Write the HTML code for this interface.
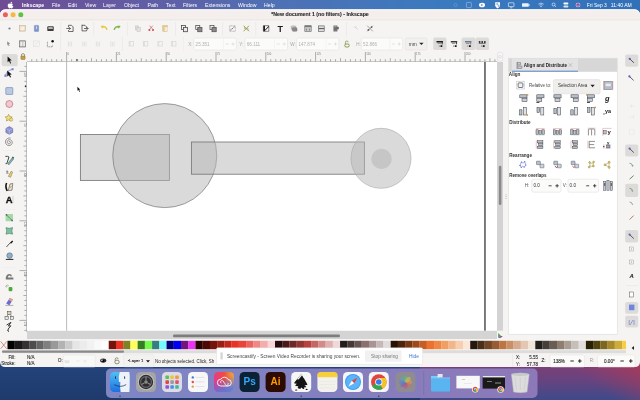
<!DOCTYPE html>
<html><head><meta charset="utf-8">
<style>
html,body{margin:0;padding:0;width:640px;height:400px;overflow:hidden;background:#23427a;}
svg{display:block;position:absolute;left:0;top:0;will-change:transform;}
text{font-family:"Liberation Sans",sans-serif;}
</style></head>
<body>
<svg width="640" height="400" viewBox="0 0 640 400">
<defs>
<linearGradient id="menuG" x1="0" y1="0" x2="1" y2="0">
<stop offset="0" stop-color="#6e4c94"/><stop offset="0.156" stop-color="#6658a0"/><stop offset="0.31" stop-color="#5a64aa"/><stop offset="0.42" stop-color="#5070b4"/><stop offset="0.7" stop-color="#3a7abf"/><stop offset="1" stop-color="#3270b8"/>
</linearGradient>
<linearGradient id="deskG" x1="0" y1="1" x2="1" y2="0">
<stop offset="0" stop-color="#1d3a6c"/><stop offset="0.55" stop-color="#2e4a84"/><stop offset="0.8" stop-color="#5c3d7c"/><stop offset="1" stop-color="#a23a5e"/>
</linearGradient>
<linearGradient id="deskR" gradientUnits="userSpaceOnUse" x1="0" y1="367" x2="0" y2="400"><stop offset="0" stop-color="#7a4078"/><stop offset="0.45" stop-color="#644480"/><stop offset="1" stop-color="#3e4a8a"/></linearGradient>
<linearGradient id="deskR2" gradientUnits="userSpaceOnUse" x1="620" y1="402" x2="648" y2="362"><stop offset="0" stop-color="#a83c5c" stop-opacity="0"/><stop offset="1" stop-color="#aa3a58" stop-opacity="1"/></linearGradient>
<linearGradient id="deskL" gradientUnits="userSpaceOnUse" x1="0" y1="367" x2="0" y2="400"><stop offset="0" stop-color="#23437a"/><stop offset="1" stop-color="#1f3a6c"/></linearGradient>
<linearGradient id="dockG" x1="0" y1="0" x2="1" y2="0">
<stop offset="0" stop-color="#7e86c4"/><stop offset="0.5" stop-color="#8480bf"/><stop offset="1" stop-color="#8d78b8"/>
</linearGradient>
<linearGradient id="finderG" x1="0" y1="0" x2="0" y2="1"><stop offset="0" stop-color="#4fc0f5"/><stop offset="1" stop-color="#1d6fe0"/></linearGradient>
<linearGradient id="ccG" x1="0" y1="0" x2="1" y2="0"><stop offset="0" stop-color="#e83a8a"/><stop offset="0.5" stop-color="#f04a40"/><stop offset="1" stop-color="#f6b030"/></linearGradient>
<linearGradient id="ccG2" x1="0" y1="0" x2="0.3" y2="1"><stop offset="0.35" stop-color="#6a5af0" stop-opacity="0"/><stop offset="1" stop-color="#4a7af0" stop-opacity="0.85"/></linearGradient>
<linearGradient id="folderG" x1="0" y1="0" x2="0" y2="1"><stop offset="0" stop-color="#7fcdf7"/><stop offset="1" stop-color="#3ea0e6"/></linearGradient>
</defs>

<rect x="0" y="0" width="640" height="400" fill="url(#deskL)"/>
<rect x="420" y="360" width="220" height="40" fill="url(#deskR)"/>
<rect x="420" y="360" width="220" height="40" fill="url(#deskR2)"/>
<rect x="0" y="0" width="640" height="16" fill="url(#menuG)"/>
<g fill="#fff" font-size="5.2">
<path d="M11.6 3.1 c0.4 -0.5 0.6 -1 0.5 -1.4 c-0.5 0 -1 0.3 -1.3 0.7 c-0.3 0.3 -0.5 0.8 -0.4 1.3 c0.5 0 0.9 -0.3 1.2 -0.6z M13.4 6.3 c-0.2 0.6 -0.5 1 -0.8 1.5 c-0.3 0.4 -0.6 0.6 -1 0.6 c-0.4 0 -0.6 -0.3 -1.1 -0.3 c-0.5 0 -0.7 0.3 -1.1 0.3 c-0.4 0 -0.7 -0.4 -1 -0.8 c-0.6 -0.9 -0.9 -2.2 -0.5 -3.1 c0.3 -0.5 0.8 -0.9 1.4 -0.9 c0.4 0 0.8 0.3 1.1 0.3 c0.3 0 0.7 -0.3 1.2 -0.3 c0.5 0 1 0.3 1.3 0.7 c-1 0.6 -0.9 2 0.5 2.0z"/>
<text x="22" y="6.6" font-weight="bold">Inkscape</text>
<text x="52" y="6.6">File</text>
<text x="68" y="6.6">Edit</text>
<text x="85" y="6.6">View</text>
<text x="103" y="6.6">Layer</text>
<text x="124" y="6.6">Object</text>
<text x="147.5" y="6.6">Path</text>
<text x="166" y="6.6">Text</text>
<text x="183" y="6.6">Filters</text>
<text x="205" y="6.6">Extensions</text>
<text x="238" y="6.6">Window</text>
<text x="264" y="6.6">Help</text>
<text x="586.8" y="6.6" font-size="4.95">Fri Sep 3</text><text x="610.8" y="6.6" font-size="5.05">11:40 AM</text>
</g>
<g fill="none" stroke="#fff" stroke-width="0.6">
<circle cx="455.6" cy="5" r="1.6" opacity="0.25"/>
<rect x="466.4" y="2.4" width="5" height="5.2" rx="1" opacity="0.55"/>
<rect x="508.4" y="2.8" width="5.6" height="3.8" rx="0.5"/><path d="M510 7.8 h2.4"/>
<path d="M538.4 4.2 q2.6 -2.4 5.2 0 M539.5 5.3 q1.5 -1.4 3 0"/>
<circle cx="553.6" cy="4.5" r="1.5"/><path d="M554.7 5.6 l1.3 1.3"/>
</g>
<g fill="#fff">
<ellipse cx="482" cy="5" rx="3" ry="2.3"/>
<path d="M495.2 2.2 h4.8 v3.4 q0 1.8 -2.4 2.8 q-2.4 -1 -2.4 -2.8z"/>
<rect x="522" y="3.2" width="6.8" height="3.6" rx="0.9" opacity="0.9"/><rect x="529" y="4.3" width="0.6" height="1.4"/>
<circle cx="541" cy="6.6" r="0.55"/>
<rect x="563.4" y="2.4" width="5" height="2.2" rx="1"/><rect x="563.4" y="5.4" width="5" height="2.2" rx="1" opacity="0.8"/>
</g>
<path d="M480.8 4 l1.8 1 l-1.8 1" fill="none" stroke="#3a5a9a" stroke-width="0.6"/>
<path d="M497.8 3.2 q-1.2 0 -1.2 0.8 q0 0.8 1.2 0.8 q1.2 0 1.2 0.8 q0 0.8 -1.2 0.8" fill="none" stroke="#3a66ac" stroke-width="0.6"/>
<circle cx="578" cy="5" r="2.3" fill="#ece8f4"/><circle cx="578" cy="5" r="1.8" fill="#5b4aa8"/><path d="M576.6 5.8 q1.4 -2.6 2.8 0z" fill="#f06a8a"/>
<rect x="0" y="9.5" width="640" height="357.6" rx="5" fill="#f5f4f2"/>
<path d="M0 14.8 a5.5 5.5 0 0 1 5.5 -5.5 H634.5 a5.5 5.5 0 0 1 5.5 5.5 V20 H0 Z" fill="#ffffff"/>
<path d="M0 15.6 a5.5 5.5 0 0 1 5.5 -5.3 H634.5 a5.5 5.5 0 0 1 5.5 5.3 V20 H0 Z" fill="#f4eeed"/>
<rect x="0" y="19.6" width="640" height="0.6" fill="#e4e0df"/>
<circle cx="5.4" cy="14.7" r="2.5" fill="#ec5f57"/><circle cx="13.1" cy="14.7" r="2.5" fill="#f2bb3d"/><circle cx="20.8" cy="14.7" r="2.5" fill="#5ec440"/>
<text x="271.3" y="16.1" font-size="5.22" font-weight="bold" fill="#2e2e2e" stroke="#2e2e2e" stroke-width="0.12">*New document 1 (no filters) - Inkscape</text>
<rect x="8.4" y="27.4" width="2.2" height="2.2" rx="1.1" fill="#6f7c94"/>
<rect x="19.6" y="25.7" width="5.8" height="5.4" fill="#e8dcc2" stroke="#b8a888" stroke-width="0.5"/>
<rect x="20.6" y="26.7" width="3.8" height="3.4" fill="#f7f1e4"/>
<rect x="34.4" y="25.4" width="4.2" height="6" rx="0.5" fill="#7f9bd0" stroke="#5a72a8" stroke-width="0.4"/>
<rect x="36.1" y="26.3" width="0.8" height="2.6" fill="#dfe8f8"/>
<rect x="47.3" y="26.3" width="6.4" height="4.8" rx="0.9" fill="#3c3c3c"/>
<rect x="48.3" y="27.3" width="4.4" height="1.5" fill="#ddd"/>
<rect x="60.6" y="22" width="0.6" height="14" fill="#e6e4e2"/>
<path d="M68.5 25.3 h3 l1.6 1.6 v4.6 h-4.6 v-1.4 M68.5 27.3 v-2" fill="none" stroke="#333" stroke-width="0.7"/>
<path d="M66.3 28.5 h4.2 M69.2 27.2 l1.3 1.3 l-1.3 1.3" fill="none" stroke="#333" stroke-width="0.7"/>
<path d="M82 25.3 h3 l1.6 1.6 v1.1 M86.6 29.7 v1.2 h-4.6 v-6.2" fill="none" stroke="#333" stroke-width="0.7"/>
<path d="M84 28.5 h4 M86.9 27.2 l1.3 1.3 l-1.3 1.3" fill="none" stroke="#333" stroke-width="0.7"/>
<rect x="93.5" y="22" width="0.6" height="14" fill="#e6e4e2"/>
<path d="M102.4 27.3 q3.4 -1.6 4.6 2.6" fill="none" stroke="#e8c838" stroke-width="1.5"/><path d="M100.6 25.9 l3 -0.4 l-1.2 3.2z" fill="#e8c838"/>
<path d="M118.8 27.3 q-3.4 -1.6 -4.6 2.6" fill="none" stroke="#78b848" stroke-width="1.5"/><path d="M120.6 25.9 l-3 -0.4 l1.2 3.2z" fill="#78b848"/>
<rect x="127.5" y="22" width="0.6" height="14" fill="#e6e4e2"/>
<rect x="135.3" y="25.9" width="3.4" height="4" fill="#ddd" stroke="#c2c2c2" stroke-width="0.5"/><rect x="137" y="27.5" width="3.4" height="4" fill="#e2e2e2" stroke="#c2c2c2" stroke-width="0.5"/>
<path d="M149.6 25.7 l3.2 3.6 M152.8 25.7 l-3.2 3.6" stroke="#d86c6c" stroke-width="0.8"/><circle cx="149.4" cy="30.1" r="1" fill="#c94848"/><circle cx="153" cy="30.1" r="1" fill="#c94848"/>
<rect x="162.8" y="25.7" width="4.4" height="5.6" fill="#e2c88a" stroke="#c9a95e" stroke-width="0.4"/><rect x="164.6" y="27.1" width="3" height="4" fill="#f4ecd6"/>
<rect x="175" y="22" width="0.6" height="14" fill="#e6e4e2"/>
<rect x="181.4" y="25.5" width="4" height="4" fill="none" stroke="#4a4a4a" stroke-width="0.8"/>
<rect x="183.4" y="27.5" width="4.2" height="4.2" fill="#e8e8e8" stroke="#4a4a4a" stroke-width="0.8"/>
<rect x="195.75" y="25.5" width="4" height="4" fill="none" stroke="#555" stroke-width="0.8"/>
<rect x="197.75" y="27.5" width="4.2" height="4.2" fill="#8a8a8a" stroke="#555" stroke-width="0.8"/>
<rect x="210" y="25.5" width="4" height="4" fill="none" stroke="#555" stroke-width="0.8"/>
<rect x="212" y="27.5" width="4.2" height="4.2" fill="#8a8a8a" stroke="#555" stroke-width="0.8"/>
<rect x="222.5" y="22" width="0.6" height="14" fill="#e6e4e2"/>
<rect x="229.7" y="25.7" width="5.6" height="5.6" fill="none" stroke="#666" stroke-width="0.5" stroke-dasharray="0.8 0.6"/><path d="M230.5 30.5 l4 -4" stroke="#555" stroke-width="0.7"/><circle cx="231.3" cy="29.5" r="0.9" fill="#bbb"/><circle cx="233.8" cy="27.1" r="0.9" fill="#bbb"/>
<path d="M243.6 25.7 l5.4 5.6 M249 25.7 l-5.4 5.6" stroke="#7a7a3a" stroke-width="0.7"/><circle cx="245" cy="27.9" r="1" fill="#b9b96a"/><circle cx="247.6" cy="29.3" r="1" fill="#b9b96a"/>
<rect x="255.6" y="22" width="0.6" height="14" fill="#e6e4e2"/>
<path d="M263.4 25.7 h5.4 v5.6 h-5.4z" fill="#fff" stroke="#333" stroke-width="0.6"/><path d="M263.4 25.7 h1.6 v4 l3.8 -4 v1.4 l-4.2 4.2 h-1.2z" fill="#1a1a1a"/>
<text x="280.2" y="31.7" font-size="9" font-weight="bold" font-family="Liberation Serif" text-anchor="middle" fill="#1e1e1e">T</text>
<rect x="291.2" y="25.9" width="4.6" height="3.6" rx="0.8" fill="#c4c4c4" stroke="#888" stroke-width="0.4"/><rect x="292.4" y="27.7" width="4.6" height="3.6" rx="0.8" fill="#8a8a8a" stroke="#666" stroke-width="0.4"/>
<rect x="304.8" y="25.7" width="6.4" height="5.8" fill="#c8c8c8" stroke="#666" stroke-width="0.6"/><rect x="304.8" y="25.7" width="6.4" height="1.4" fill="#777"/><path d="M306 28.8 l1 0.8 l-1 0.8 M310 28.8 l-1 0.8 l1 0.8" stroke="#444" stroke-width="0.5" fill="none"/>
<rect x="318.6" y="25.9" width="5.6" height="5.4" fill="#ddd" stroke="#555" stroke-width="0.6"/><rect x="318.6" y="28.1" width="5.6" height="1" fill="#555"/>
<rect x="333.4" y="25.5" width="4" height="6" fill="#777"/><rect x="334.2" y="26.9" width="4.6" height="2.4" fill="#6a6a6a"/><rect x="334.2" y="26.3" width="2.2" height="1" fill="#aaa"/>
<rect x="346.25" y="22" width="0.6" height="14" fill="#e6e4e2"/>
<path d="M354.6 26.5 l3.2 3.2 M356.4 26.1 l-2 2" stroke="#cfcfcf" stroke-width="0.8"/>
<path d="M367.2 25.7 l5.6 5.6 M372.8 25.7 l-5.6 5.6" stroke="#666" stroke-width="0.6"/><circle cx="368.4" cy="29.9" r="0.9" fill="#555"/><circle cx="371.6" cy="27.1" r="0.9" fill="#555"/>
<path d="M7.2 41.199999999999996 l3 2.6 l-1.4 0.3 l0.8 1.8 l-0.8 0.3 l-0.8 -1.8 l-0.8 1z" fill="#8a8f9a"/>
<rect x="19.3" y="40.8" width="6.4" height="6.2" fill="#bdbdbd" stroke="#6d6d6d" stroke-width="0.6"/><rect x="20.3" y="41.8" width="2" height="4.2" fill="#eee"/><rect x="23.3" y="41.8" width="1.6" height="4.2" fill="#eee"/>
<rect x="33.6" y="41.0" width="5.6" height="5.6" fill="none" stroke="#dcdcdc" stroke-width="0.6"/><path d="M34.4 45.599999999999994 l3.8 -3.8" stroke="#dcdcdc" stroke-width="0.6"/>
<path d="M47.4 41.8 v5 h5 v-2" fill="none" stroke="#444" stroke-width="0.6" stroke-dasharray="1 0.7"/><circle cx="52.6" cy="41.199999999999996" r="1.2" fill="#111"/>
<rect x="60.2" y="37" width="0.6" height="14" fill="#e6e4e2"/>
<path d="M68.4 41.199999999999996 v5.2 M70 42.199999999999996 v4.2 M71.6 41.599999999999994 v4.8" stroke="#e0e0e0" stroke-width="0.9"/>
<path d="M82.80000000000001 41.199999999999996 v5.2 M84.4 42.199999999999996 v4.2 M86.0 41.599999999999994 v4.8" stroke="#e0e0e0" stroke-width="0.9"/>
<path d="M96.4 41.199999999999996 v5.2 M98 42.199999999999996 v4.2 M99.6 41.599999999999994 v4.8" stroke="#e0e0e0" stroke-width="0.9"/>
<path d="M110.9 41.199999999999996 v5.2 M112.5 42.199999999999996 v4.2 M114.1 41.599999999999994 v4.8" stroke="#e0e0e0" stroke-width="0.9"/>
<rect x="122" y="37" width="0.6" height="14" fill="#e6e4e2"/>
<rect x="128.65" y="41.0" width="1" height="5.6" fill="#dcdcdc"/><rect x="130.05" y="41.599999999999994" width="3.4" height="4.4" fill="none" stroke="#d8d8d8" stroke-width="0.7"/>
<rect x="143.0" y="41.0" width="1" height="5.6" fill="#dcdcdc"/><rect x="144.4" y="41.599999999999994" width="3.4" height="4.4" fill="none" stroke="#d8d8d8" stroke-width="0.7"/>
<rect x="157.4" y="41.0" width="1" height="5.6" fill="#dcdcdc"/><rect x="158.8" y="41.599999999999994" width="3.4" height="4.4" fill="none" stroke="#d8d8d8" stroke-width="0.7"/>
<rect x="171.15" y="41.0" width="1" height="5.6" fill="#dcdcdc"/><rect x="172.55" y="41.599999999999994" width="3.4" height="4.4" fill="none" stroke="#d8d8d8" stroke-width="0.7"/>
<rect x="183" y="37" width="0.6" height="14" fill="#eeeceb"/>
<g font-size="4.6" fill="#a8a8a8">
<text x="188.2" y="45.5">X:</text><text x="239.3" y="45.5">Y:</text><text x="290.3" y="45.5">W:</text><text x="356.3" y="45.5">H:</text>
</g>
<rect x="193.8" y="38" width="42.5" height="12" rx="1.2" fill="#fbfbfa" stroke="#e0dedc" stroke-width="0.5"/>
<rect x="223.3" y="38.3" width="0.5" height="11.4" fill="#efedeb"/>
<path d="M225.6 44 h3 M231.5 44 h3 M233 42.5 v3" stroke="#d4d4d4" stroke-width="0.6"/>
<text x="195.6" y="45.7" font-size="4.6" fill="#b0b0b0">25.351</text>
<rect x="245" y="38" width="42.5" height="12" rx="1.2" fill="#fbfbfa" stroke="#e0dedc" stroke-width="0.5"/>
<rect x="274.5" y="38.3" width="0.5" height="11.4" fill="#efedeb"/>
<path d="M276.8 44 h3 M282.7 44 h3 M284.2 42.5 v3" stroke="#d4d4d4" stroke-width="0.6"/>
<text x="246.8" y="45.7" font-size="4.6" fill="#b0b0b0">66.111</text>
<rect x="296.6" y="38" width="42.2" height="12" rx="1.2" fill="#fbfbfa" stroke="#e0dedc" stroke-width="0.5"/>
<rect x="325.8" y="38.3" width="0.5" height="11.4" fill="#efedeb"/>
<path d="M328.1 44 h3 M334 44 h3 M335.5 42.5 v3" stroke="#d4d4d4" stroke-width="0.6"/>
<text x="298.4" y="45.7" font-size="4.6" fill="#b0b0b0">147.874</text>
<rect x="361.3" y="38" width="41.3" height="12" rx="1.2" fill="#fbfbfa" stroke="#e0dedc" stroke-width="0.5"/>
<rect x="389.6" y="38.3" width="0.5" height="11.4" fill="#efedeb"/>
<path d="M391.9 44 h3 M397.8 44 h3 M399.3 42.5 v3" stroke="#d4d4d4" stroke-width="0.6"/>
<text x="363.1" y="45.7" font-size="4.6" fill="#b0b0b0">52.866</text>
<path d="M345.4 44.199999999999996 v-1.8 a1.4 1.4 0 0 1 2.8 0" fill="none" stroke="#7a8a3a" stroke-width="0.7"/><rect x="344.8" y="44.0" width="4.4" height="3" rx="1.3" fill="none" stroke="#6f8a2a" stroke-width="0.8"/>
<rect x="405.4" y="38" width="21.6" height="12" rx="1.4" fill="#f1f0ee" stroke="#e0dedc" stroke-width="0.5"/>
<text x="408.8" y="45.599999999999994" font-size="4.8" fill="#444">mm</text><path d="M419.2 42.699999999999996 h4.4 l-2.2 2.4z" fill="#222"/>
<rect x="433.2" y="37.6" width="13.3" height="12.4" rx="1.8" fill="#dcdbd9"/>
<rect x="461.6" y="37.6" width="13.6" height="12.4" rx="1.8" fill="#dcdbd9"/>
<rect x="475.4" y="37.6" width="13.6" height="12.4" rx="1.8" fill="#dcdbd9"/>
<rect x="436.5" y="41" width="6.4" height="1.5" fill="#1a1a1a"/><path d="M442.2 42 v2.4" stroke="#1a1a1a" stroke-width="0.9"/><rect x="437.5" y="43.2" width="3.6" height="0.7" fill="#777"/>
<rect x="438.7" y="45.4" width="1.2" height="1.4" fill="#999"/><rect x="440.5" y="45.2" width="1.8" height="1.8" fill="#1a1a1a"/>
<rect x="450.8" y="41" width="6.4" height="1.5" fill="#3a3a3a"/><path d="M456.5 42 v2.4" stroke="#3a3a3a" stroke-width="0.9"/><rect x="451.8" y="43.2" width="3.6" height="0.7" fill="#777"/>
<rect x="453" y="45.4" width="1.2" height="1.4" fill="#999"/><rect x="454.8" y="45.2" width="1.8" height="1.8" fill="#1a1a1a"/>
<rect x="465" y="41" width="6.4" height="1.5" fill="#6a7890"/><path d="M470.7 42 v2.4" stroke="#6a7890" stroke-width="0.9"/><rect x="466" y="43.2" width="3.6" height="0.7" fill="#777"/>
<rect x="467.2" y="45.4" width="1.2" height="1.4" fill="#999"/><rect x="469" y="45.2" width="1.8" height="1.8" fill="#1a1a1a"/>
<rect x="478.8" y="41.2" width="1.6" height="1.6" fill="#1a1a1a"/><rect x="481.4" y="41.2" width="1.6" height="1.6" fill="#1a1a1a"/><rect x="484" y="41.2" width="1.6" height="1.6" fill="#1a1a1a"/><rect x="478.8" y="43.2" width="6.8" height="0.7" fill="#555"/>
<rect x="481" y="45.4" width="1.2" height="1.4" fill="#999"/><rect x="482.8" y="45.2" width="1.8" height="1.8" fill="#1a1a1a"/>
<rect x="1.7" y="54" width="16" height="12.2" rx="1.8" fill="#dcdbd9"/>
<path d="M7.6 56.6 l4.2 3.8 l-1.9 0.2 l1.2 2.6 l-0.9 0.4 l-1.2 -2.6 l-1.4 1.3z" fill="#111"/>
<path d="M5.6 76 q0.6 -5.4 6.8 -6.6" fill="none" stroke="#5a6fc9" stroke-width="0.7"/><rect x="4.4" y="74.6" width="2.2" height="2.2" fill="#6f80d8"/><rect x="11.6" y="68.2" width="2" height="2" fill="#6f80d8"/><path d="M7.2 70.6 l4.6 3.8 l-2 0.3 l1.3 2.4 l-1 0.5 l-1.2 -2.4 l-1.6 1.3z" fill="#111"/>
<rect x="5.8" y="87.6" width="7" height="6.8" rx="0.5" fill="#b9cbe4" stroke="#6b7f9e" stroke-width="0.6"/>
<circle cx="9.3" cy="104" r="3.5" fill="#f2c7cd" stroke="#b35c6d" stroke-width="0.6"/>
<path d="M8.6 114.4 l1.1 2.2 l2.4 0.3 l-1.7 1.7 l0.4 2.4 l-2.2 -1.1 l-2.2 1.1 l0.4 -2.4 l-1.7 -1.7 l2.4 -0.3z" fill="#f5e07a" stroke="#8a7a2a" stroke-width="0.5"/><circle cx="11.2" cy="119.6" r="1.6" fill="#f5e07a" stroke="#8a7a2a" stroke-width="0.4"/>
<path d="M9.3 126.6 l3.4 1.9 v3.9 l-3.4 1.9 l-3.4 -1.9 v-3.9z" fill="#8e95d6" stroke="#4b4f7a" stroke-width="0.5"/><path d="M5.9 128.5 l3.4 1.9 l3.4 -1.9 M9.3 130.4 v4" fill="none" stroke="#d6d9f5" stroke-width="0.4"/>
<path d="M9.00 142.20 L8.96 142.14 L8.93 142.06 L8.91 141.97 L8.92 141.87 L8.96 141.77 L9.02 141.67 L9.10 141.58 L9.21 141.51 L9.34 141.45 L9.49 141.42 L9.64 141.42 L9.81 141.46 L9.97 141.52 L10.12 141.62 L10.25 141.76 L10.37 141.93 L10.45 142.12 L10.49 142.33 L10.50 142.56 L10.46 142.79 L10.37 143.02 L10.24 143.24 L10.07 143.43 L9.85 143.59 L9.60 143.72 L9.33 143.80 L9.03 143.83 L8.72 143.80 L8.42 143.71 L8.13 143.57 L7.87 143.37 L7.64 143.12 L7.45 142.82 L7.32 142.48 L7.25 142.12 L7.25 141.74 L7.32 141.36 L7.46 140.99 L7.67 140.65 L7.95 140.34 L8.28 140.08 L8.67 139.89 L9.09 139.76 L9.54 139.71 L9.99 139.75 L10.44 139.87 L10.87 140.07 L11.27 140.35 L11.61 140.71 L11.89 141.13 L12.09 141.60 L12.20 142.11 L12.22 142.64 L12.14 143.17 L11.96 143.69 L11.69 144.18 L11.33 144.61 L10.89 144.98 L10.38 145.27 L9.82 145.46 L9.22 145.55 L8.61 145.53 L8.00 145.40 L7.42 145.16 L6.89 144.81 L6.42 144.36 L6.03 143.83 L5.75 143.23 L5.57 142.58 L5.51 141.90 L5.58 141.21 L5.77 140.54 L6.09 139.90 L6.52 139.33 L7.05 138.83 L7.67 138.44 L8.36 138.16 L9.10 138.00 L9.87 137.99 L10.63 138.11" fill="none" stroke="#6a6a6a" stroke-width="0.75"/>
<rect x="3" y="150" width="13" height="0.5" fill="#ecebe9"/>
<path d="M5.4 156.4 q2.4 -0.4 3.6 0.6 l-2.2 6.6 h-1.2" fill="none" stroke="#333" stroke-width="0.9"/><path d="M7.6 163.8 l4.6 -6 l1.4 1.2 l-4.6 5.8z" fill="#7ab8b0" stroke="#2f5a5a" stroke-width="0.45"/><path d="M11.8 157.6 l1 -1 l1.4 1.2 l-0.8 1z" fill="#2a5a5a"/>
<path d="M6 171.2 h2 l-1.4 2 h2" fill="none" stroke="#444" stroke-width="0.6"/><path d="M8.4 176.4 l2.6 -5 l1.6 0.6 l-2 5.2z" fill="#f1d26a" stroke="#6f6a3a" stroke-width="0.5"/>
<path d="M6.6 183 q-1.6 3.4 0.6 8" fill="none" stroke="#111" stroke-width="1.6"/><path d="M8.2 190.6 l1.8 -6.6 l2.8 -0.6 l-0.8 6.8z" fill="#e8e0c0" stroke="#333" stroke-width="0.5"/><path d="M9.6 188 l2 -2" stroke="#8a7a3a" stroke-width="0.6"/>
<text x="9.2" y="203.4" font-size="9.4" font-weight="bold" text-anchor="middle" fill="#111" stroke="#111" stroke-width="0.35">A</text><rect x="12.8" y="196" width="0.4" height="7" fill="#999"/>
<rect x="3" y="209" width="13" height="0.5" fill="#ecebe9"/>
<rect x="5.6" y="214" width="7.4" height="7.2" fill="#a8d8a8"/><path d="M6.4 214.8 l5.8 5.8" stroke="#3f7a4f" stroke-width="0.7"/><rect x="5.8" y="214.2" width="1.4" height="1.4" fill="#557"/><rect x="11.4" y="219.8" width="1.4" height="1.4" fill="#557"/>
<path d="M6 227.6 q3.3 1.4 6.6 0 q-1.4 3.3 0 6.6 q-3.3 -1.4 -6.6 0 q1.4 -3.3 0 -6.6z" fill="#7fbfa0" stroke="#3a6a5a" stroke-width="0.5"/>
<path d="M6.4 247 l4 -4.4" stroke="#333" stroke-width="0.8"/><path d="M10 242.8 l2.2 -2.2 l1 1 l-2.2 2.2z" fill="#111"/>
<circle cx="9.6" cy="255.6" r="2.8" fill="#8fb0c8" stroke="#4a5a6a" stroke-width="0.5"/><path d="M5.8 259.4 h7.6" stroke="#222" stroke-width="1"/>
<rect x="3" y="267" width="13" height="0.5" fill="#ecebe9"/>
<path d="M5.8 279.6 v-2 q0.6 -3.2 3.4 -3.6 q2.6 0 2.8 2.2 l-1.4 0.2 q-0.6 -1 -1.4 -0.8 q-1.2 0.4 -1.4 2 h5.6 v2z" fill="#777"/>
<path d="M6 285 l1.4 1.4 M7.6 284.6 l0.8 1.6 M5.4 286.6 l1.6 0.4" stroke="#666" stroke-width="0.5"/><rect x="8.6" y="287" width="3.8" height="4.2" rx="1" fill="#4faa3a"/>
<path d="M6.2 303.6 l3.6 -5.6 l3 1.6 l-3.4 5.6z" fill="#6a6ad8"/><path d="M9.8 298 l3 1.6 l-1.2 2 l-3 -1.6z" fill="#e8a080"/><path d="M5.4 305.4 h8" stroke="#666" stroke-width="0.5"/>
<path d="M8.4 314.4 l-1.8 2.4 M10.2 314.4 l1.8 2.4" stroke="#555" stroke-width="0.6"/><rect x="7.6" y="311.4" width="3.4" height="3" fill="#d8d2b8" stroke="#444" stroke-width="0.5"/><rect x="5" y="316.6" width="3.2" height="3" fill="#e8e8e8" stroke="#444" stroke-width="0.5"/><rect x="10.4" y="316.6" width="3.2" height="3" fill="#e8e8e8" stroke="#444" stroke-width="0.5"/>
<path d="M6.6 325 l4.4 -2.6 l-2.6 3.6 l2.4 -0.2 l-2.6 3.2 l-0.4 2" fill="none" stroke="#222" stroke-width="0.9"/><path d="M7.6 330.6 l0.8 1.6 l0.6 -1.4z" fill="#222"/>
<rect x="19" y="51.5" width="478" height="10.5" fill="#f5f4f2"/>
<rect x="27" y="61.3" width="470" height="0.6" fill="#a8a8a8"/>
<rect x="26.4" y="62" width="0.6" height="270" fill="#9a9a9a"/>
<path d="M21.4 56.2 v-1 a1.6 1.6 0 0 1 3.2 0 v1" fill="none" stroke="#6a5a2a" stroke-width="0.6"/><rect x="20.9" y="56" width="4.2" height="3.4" rx="0.6" fill="#c9a23a" stroke="#6a5a2a" stroke-width="0.4"/>
<path d="M31.74 59.2 V61.5 M36.72 59.2 V61.5 M41.7 58.2 V61.5 M46.68 59.2 V61.5 M51.66 59.2 V61.5 M56.64 59.2 V61.5 M61.62 59.2 V61.5 M66.6 52 V61.5 M71.58 59.2 V61.5 M76.56 59.2 V61.5 M81.54 59.2 V61.5 M86.52 59.2 V61.5 M91.5 58.2 V61.5 M96.48 59.2 V61.5 M101.46 59.2 V61.5 M106.44 59.2 V61.5 M111.42 59.2 V61.5 M116.4 52 V61.5 M121.38 59.2 V61.5 M126.36 59.2 V61.5 M131.34 59.2 V61.5 M136.32 59.2 V61.5 M141.3 58.2 V61.5 M146.28 59.2 V61.5 M151.26 59.2 V61.5 M156.24 59.2 V61.5 M161.22 59.2 V61.5 M166.2 52 V61.5 M171.18 59.2 V61.5 M176.16 59.2 V61.5 M181.14 59.2 V61.5 M186.12 59.2 V61.5 M191.1 58.2 V61.5 M196.08 59.2 V61.5 M201.06 59.2 V61.5 M206.04 59.2 V61.5 M211.02 59.2 V61.5 M216 52 V61.5 M220.98 59.2 V61.5 M225.96 59.2 V61.5 M230.94 59.2 V61.5 M235.92 59.2 V61.5 M240.9 58.2 V61.5 M245.88 59.2 V61.5 M250.86 59.2 V61.5 M255.84 59.2 V61.5 M260.82 59.2 V61.5 M265.8 52 V61.5 M270.78 59.2 V61.5 M275.76 59.2 V61.5 M280.74 59.2 V61.5 M285.72 59.2 V61.5 M290.7 58.2 V61.5 M295.68 59.2 V61.5 M300.66 59.2 V61.5 M305.64 59.2 V61.5 M310.62 59.2 V61.5 M315.6 52 V61.5 M320.58 59.2 V61.5 M325.56 59.2 V61.5 M330.54 59.2 V61.5 M335.52 59.2 V61.5 M340.5 58.2 V61.5 M345.48 59.2 V61.5 M350.46 59.2 V61.5 M355.44 59.2 V61.5 M360.42 59.2 V61.5 M365.4 52 V61.5 M370.38 59.2 V61.5 M375.36 59.2 V61.5 M380.34 59.2 V61.5 M385.32 59.2 V61.5 M390.3 58.2 V61.5 M395.28 59.2 V61.5 M400.26 59.2 V61.5 M405.24 59.2 V61.5 M410.22 59.2 V61.5 M415.2 52 V61.5 M420.18 59.2 V61.5 M425.16 59.2 V61.5 M430.14 59.2 V61.5 M435.12 59.2 V61.5 M440.1 58.2 V61.5 M445.08 59.2 V61.5 M450.06 59.2 V61.5 M455.04 59.2 V61.5 M460.02 59.2 V61.5 M465 52 V61.5 M469.98 59.2 V61.5 M474.96 59.2 V61.5 M479.94 59.2 V61.5 M484.92 59.2 V61.5 M489.9 58.2 V61.5 M494.88 59.2 V61.5" stroke="#7a7a7a" stroke-width="0.6"/>
<text x="67.5" y="54.9" font-size="2.7" fill="#777">0</text>
<text x="117.3" y="54.9" font-size="2.7" fill="#777">25</text>
<text x="167.1" y="54.9" font-size="2.7" fill="#777">50</text>
<text x="216.9" y="54.9" font-size="2.7" fill="#777">75</text>
<text x="266.7" y="54.9" font-size="2.7" fill="#777">100</text>
<text x="316.5" y="54.9" font-size="2.7" fill="#777">125</text>
<text x="366.3" y="54.9" font-size="2.7" fill="#777">150</text>
<text x="416.1" y="54.9" font-size="2.7" fill="#777">175</text>
<text x="465.9" y="54.9" font-size="2.7" fill="#777">200</text>
<path d="M75.8 59.4 h2.6 l-1.3 1.6z" fill="#222"/>
<path d="M24.4 66.42 H26.4 M19.5 71.4 H26.4 M24.4 76.38 H26.4 M24.4 81.36 H26.4 M24.4 86.34 H26.4 M24.4 91.32 H26.4 M23.4 96.3 H26.4 M24.4 101.28 H26.4 M24.4 106.26 H26.4 M24.4 111.24 H26.4 M24.4 116.22 H26.4 M19.5 121.2 H26.4 M24.4 126.18 H26.4 M24.4 131.16 H26.4 M24.4 136.14 H26.4 M24.4 141.12 H26.4 M23.4 146.1 H26.4 M24.4 151.08 H26.4 M24.4 156.06 H26.4 M24.4 161.04 H26.4 M24.4 166.02 H26.4 M19.5 171 H26.4 M24.4 175.98 H26.4 M24.4 180.96 H26.4 M24.4 185.94 H26.4 M24.4 190.92 H26.4 M23.4 195.9 H26.4 M24.4 200.88 H26.4 M24.4 205.86 H26.4 M24.4 210.84 H26.4 M24.4 215.82 H26.4 M19.5 220.8 H26.4 M24.4 225.78 H26.4 M24.4 230.76 H26.4 M24.4 235.74 H26.4 M24.4 240.72 H26.4 M23.4 245.7 H26.4 M24.4 250.68 H26.4 M24.4 255.66 H26.4 M24.4 260.64 H26.4 M24.4 265.62 H26.4 M19.5 270.6 H26.4 M24.4 275.58 H26.4 M24.4 280.56 H26.4 M24.4 285.54 H26.4 M24.4 290.52 H26.4 M23.4 295.5 H26.4 M24.4 300.48 H26.4 M24.4 305.46 H26.4 M24.4 310.44 H26.4 M24.4 315.42 H26.4 M19.5 320.4 H26.4 M24.4 325.38 H26.4 M24.4 330.36 H26.4" stroke="#7a7a7a" stroke-width="0.6"/>
<text transform="translate(24.2 72.6) rotate(90)" font-size="2.7" fill="#777">50</text>
<text transform="translate(24.2 122.4) rotate(90)" font-size="2.7" fill="#777">75</text>
<text transform="translate(24.2 172.2) rotate(90)" font-size="2.7" fill="#777">100</text>
<text transform="translate(24.2 222) rotate(90)" font-size="2.7" fill="#777">125</text>
<text transform="translate(24.2 271.8) rotate(90)" font-size="2.7" fill="#777">150</text>
<text transform="translate(24.2 321.6) rotate(90)" font-size="2.7" fill="#777">175</text>
<path d="M25 85 v2.6 l1.4 -1.3z" fill="#222"/>
<rect x="27" y="62" width="470" height="268.8" fill="#ffffff"/>
<rect x="66.2" y="62" width="0.9" height="268.8" fill="#b4b4b4"/>
<rect x="484" y="62" width="1.9" height="268.8" fill="#767676"/>
<g stroke="#787878" stroke-width="0.85">
<rect x="80.4" y="134.5" width="89" height="45.9" fill="rgba(183,183,183,0.51)"/>
<circle cx="164.75" cy="155.6" r="52" fill="rgba(183,183,183,0.51)" stroke-width="0.7"/>
<rect x="191.4" y="142" width="173" height="32.2" fill="rgba(183,183,183,0.51)"/>
<circle cx="381" cy="158.3" r="30" fill="rgba(183,183,183,0.51)" stroke="#a8a8a8" stroke-width="0.6"/>
</g>
<circle cx="381.5" cy="158.9" r="10.2" fill="rgba(160,160,160,0.345)"/>
<path d="M77.4 86.8 l2.8 2.8 l-1.1 0.1 l0.9 1.9 l-0.6 0.3 l-0.9 -1.9 l-1 0.8z" fill="#111"/>
<rect x="27" y="330.8" width="470" height="8.2" fill="#d4d4d4"/>
<rect x="173" y="334.6" width="167" height="2.6" rx="1.3" fill="#7d7d7d"/>
<rect x="497" y="62" width="6" height="268.8" fill="#d3d3d3"/>
<rect x="498.8" y="165.8" width="2.6" height="39.2" rx="1.3" fill="#898989"/>
<rect x="497" y="51.5" width="6" height="10" fill="#f5f4f2"/>
<rect x="497.6" y="52.6" width="5" height="8.4" rx="0.8" fill="#f7f7f7" stroke="#d6d6d6" stroke-width="0.5"/>
<circle cx="500" cy="56.8" r="1.3" fill="none" stroke="#c8c8c8" stroke-width="0.5"/>
<rect x="497" y="330.8" width="6" height="8.2" fill="#f5f4f2"/>
<path d="M498.2 333 l2.4 2.4 l-2.4 2.4z" fill="#46a04a"/><path d="M500.6 335.4 l2.2 1.4 l-2.4 1z" fill="#c23a3a"/><path d="M498.2 337.8 l2.4 -2.4 l0 2.6z" fill="#3a5ac2"/>
<g fill="#999"><rect x="505.6" y="194.5" width="0.8" height="0.8"/><rect x="505.6" y="196.3" width="0.8" height="0.8"/><rect x="505.6" y="198.1" width="0.8" height="0.8"/></g>
<rect x="508.6" y="58.2" width="108.6" height="276" fill="#ffffff" stroke="#d8d8d8" stroke-width="0.5"/>
<rect x="508.6" y="58.2" width="108.6" height="13.6" fill="#d7d7d7"/>
<rect x="512" y="58.4" width="66" height="13" fill="#e3e3e3"/>
<rect x="512" y="70.6" width="66" height="1.3" fill="#7b9bd0"/>
<path d="M516.6 62.2 v7" stroke="#c08080" stroke-width="0.5"/><rect x="517.2" y="62.6" width="3.6" height="2.4" fill="#c4c8ce" stroke="#555" stroke-width="0.4"/><rect x="517.2" y="66" width="4.8" height="2.6" fill="#c4c8ce" stroke="#555" stroke-width="0.4"/>
<text x="523.8" y="67.1" font-size="4.55" font-weight="bold" fill="#1e1e1e">Align and Distribute</text>
<path d="M568.6 63.2 l3.6 3.6 M572.2 63.2 l-3.6 3.6" stroke="#a8a8a8" stroke-width="0.6"/>
<g font-size="4.9" font-weight="bold" fill="#333" lengthAdjust="spacingAndGlyphs">
<text x="508.8" y="76.4" textLength="11.6" lengthAdjust="spacingAndGlyphs">Align</text><text x="509.2" y="123.5" textLength="21.4" lengthAdjust="spacingAndGlyphs">Distribute</text><text x="509.2" y="157" textLength="22.8" lengthAdjust="spacingAndGlyphs">Rearrange</text><text x="509.2" y="177.4" textLength="37.2" lengthAdjust="spacingAndGlyphs">Remove overlaps</text>
</g>
<rect x="516.6" y="81.4" width="7.8" height="7.6" fill="none" stroke="#666" stroke-width="0.4" stroke-dasharray="0.8 0.5"/><rect x="518.1" y="82.9" width="4.8" height="4.6" rx="0.8" fill="#eef2f8" stroke="#333" stroke-width="0.65"/>
<text x="529" y="87" font-size="5.1" fill="#444" textLength="22.2" lengthAdjust="spacingAndGlyphs">Relative to:</text>
<rect x="553.4" y="79.6" width="46.8" height="14.2" rx="1.6" fill="#efeeec" stroke="#dddbd9" stroke-width="0.5"/>
<text x="557.9" y="87" font-size="5.1" fill="#333" textLength="29.5" lengthAdjust="spacingAndGlyphs">Selection Area</text><path d="M590.4 84.8 h4.4 l-2.2 2.4z" fill="#222"/>
<rect x="604" y="81.2" width="8.4" height="8.6" fill="#b4bcc8" stroke="#666" stroke-width="0.4"/><path d="M603.6 81 v9.2 M612.8 81 v9.2" stroke="#d07a7a" stroke-width="0.5"/><rect x="605.6" y="83.6" width="5.2" height="2.6" fill="#e8ecf2"/>
<rect x="519.8" y="94.8" width="7.2" height="3" fill="#b8c0cc" stroke="#3a3a3a" stroke-width="0.5"/>
<rect x="522" y="98.5" width="5" height="3.2" fill="#c8d0dc" stroke="#3a3a3a" stroke-width="0.5"/>
<circle cx="527.6" cy="94.8" r="0.9" fill="#d89a4a"/>
<rect x="536.8" y="94.8" width="7.2" height="3" fill="#b8c0cc" stroke="#3a3a3a" stroke-width="0.5"/>
<rect x="536.8" y="98.5" width="5" height="3.2" fill="#c8d0dc" stroke="#3a3a3a" stroke-width="0.5"/>
<rect x="536.4" y="102" width="3" height="0.8" fill="#222"/>
<rect x="553.9" y="94.8" width="7.2" height="3" fill="#b8c0cc" stroke="#3a3a3a" stroke-width="0.5"/>
<rect x="555" y="98.5" width="5" height="3.2" fill="#c8d0dc" stroke="#3a3a3a" stroke-width="0.5"/>
<rect x="571" y="94.8" width="7.2" height="3" fill="#b8c0cc" stroke="#3a3a3a" stroke-width="0.5"/>
<rect x="573.2" y="98.5" width="5" height="3.2" fill="#c8d0dc" stroke="#3a3a3a" stroke-width="0.5"/>
<rect x="587.4" y="94.8" width="7.2" height="3" fill="#b8c0cc" stroke="#3a3a3a" stroke-width="0.5"/>
<rect x="587.4" y="98.5" width="5" height="3.2" fill="#c8d0dc" stroke="#3a3a3a" stroke-width="0.5"/>
<circle cx="586.8" cy="94.8" r="0.9" fill="#d89a4a"/>
<rect x="587" y="102" width="3" height="0.8" fill="#222"/>
<text x="607.2" y="101.0" font-size="7.4" font-style="italic" font-weight="bold" font-family="Liberation Serif" text-anchor="middle" fill="#222">g</text>
<rect x="519.6" y="109.8" width="2.4" height="5.2" fill="#b8c0cc" stroke="#3a3a3a" stroke-width="0.5"/>
<rect x="523.4" y="107.4" width="3" height="7.6" fill="#dde2ea" stroke="#3a3a3a" stroke-width="0.5"/>
<circle cx="527.2" cy="115" r="0.9" fill="#d89a4a"/>
<rect x="537" y="107.4" width="2.4" height="5.2" fill="#b8c0cc" stroke="#3a3a3a" stroke-width="0.5"/>
<rect x="540.8" y="107.4" width="3" height="7.6" fill="#dde2ea" stroke="#3a3a3a" stroke-width="0.5"/>
<rect x="553.9" y="108.6" width="2.4" height="5.2" fill="#b8c0cc" stroke="#3a3a3a" stroke-width="0.5"/>
<rect x="557.7" y="107.4" width="3" height="7.6" fill="#dde2ea" stroke="#3a3a3a" stroke-width="0.5"/>
<rect x="570.8" y="109.8" width="2.4" height="5.2" fill="#b8c0cc" stroke="#3a3a3a" stroke-width="0.5"/>
<rect x="574.6" y="107.4" width="3" height="7.6" fill="#dde2ea" stroke="#3a3a3a" stroke-width="0.5"/>
<rect x="587.6" y="107.4" width="2.4" height="5.2" fill="#b8c0cc" stroke="#3a3a3a" stroke-width="0.5"/>
<rect x="591.4" y="107.4" width="3" height="7.6" fill="#dde2ea" stroke="#3a3a3a" stroke-width="0.5"/>
<circle cx="595.2" cy="107.4" r="0.9" fill="#d89a4a"/>
<text x="608.0" y="113.0" font-size="5.4" font-weight="bold" text-anchor="middle" fill="#222">ya</text><circle cx="604.0" cy="114.0" r="0.7" fill="#444"/>
<path d="M535.9 128.6 h8.8" stroke="#d07878" stroke-width="0.45"/>
<rect x="536" y="129.8" width="2.3" height="4.6" fill="#b9bfc9" stroke="#3a3a3a" stroke-width="0.45"/>
<rect x="539" y="130.6" width="2.3" height="3.8" fill="#b9bfc9" stroke="#3a3a3a" stroke-width="0.45"/>
<rect x="542" y="129.8" width="2.3" height="4.6" fill="#b9bfc9" stroke="#3a3a3a" stroke-width="0.45"/>
<path d="M535.9 135 h8.8" stroke="#9aa" stroke-width="0.35"/>
<path d="M553.2 128.6 h8.8" stroke="#d07878" stroke-width="0.45"/>
<rect x="553.3" y="129.8" width="2.3" height="4.6" fill="#b9bfc9" stroke="#3a3a3a" stroke-width="0.45"/>
<rect x="556.3" y="130.6" width="2.3" height="3.8" fill="#b9bfc9" stroke="#3a3a3a" stroke-width="0.45"/>
<rect x="559.3" y="129.8" width="2.3" height="4.6" fill="#b9bfc9" stroke="#3a3a3a" stroke-width="0.45"/>
<path d="M553.2 135 h8.8" stroke="#9aa" stroke-width="0.35"/>
<path d="M570.6 128.6 h8.8" stroke="#d07878" stroke-width="0.45"/>
<rect x="570.7" y="129.8" width="2.3" height="4.6" fill="#b9bfc9" stroke="#3a3a3a" stroke-width="0.45"/>
<rect x="573.7" y="130.6" width="2.3" height="3.8" fill="#b9bfc9" stroke="#3a3a3a" stroke-width="0.45"/>
<rect x="576.7" y="129.8" width="2.3" height="4.6" fill="#b9bfc9" stroke="#3a3a3a" stroke-width="0.45"/>
<path d="M570.6 135 h8.8" stroke="#9aa" stroke-width="0.35"/>
<path d="M588.4 135.4 v-5.6 q0 -0.8 1 -0.8 h4.4 q1 0 1 0.8 v5.6 M591.6 129.4 v6" fill="none" stroke="#444" stroke-width="0.6"/><path d="M587.6 128.2 h8" stroke="#d07878" stroke-width="0.4"/>
<rect x="603.2" y="130.4" width="3" height="3.6" fill="#b9c2d0" stroke="#444" stroke-width="0.45"/><text x="609.2" y="134" font-size="6" font-weight="bold" text-anchor="middle" fill="#222">y</text><path d="M602.8000000000001 128.4 h8.8 M602.8000000000001 128.4 v7.6" stroke="#d07878" stroke-width="0.4"/>
<path d="M536.3 140.6 v8" stroke="#d07878" stroke-width="0.45"/>
<rect x="537.5" y="140.7" width="5.4" height="2.2" fill="#b9bfc9" stroke="#3a3a3a" stroke-width="0.45"/>
<rect x="538.4" y="143.5" width="4.5" height="2.2" fill="#b9bfc9" stroke="#3a3a3a" stroke-width="0.45"/>
<rect x="537.5" y="146.3" width="5.4" height="2.2" fill="#b9bfc9" stroke="#3a3a3a" stroke-width="0.45"/>
<path d="M553.6 140.6 v8" stroke="#d07878" stroke-width="0.45"/>
<rect x="554.8" y="140.7" width="5.4" height="2.2" fill="#b9bfc9" stroke="#3a3a3a" stroke-width="0.45"/>
<rect x="555.7" y="143.5" width="4.5" height="2.2" fill="#b9bfc9" stroke="#3a3a3a" stroke-width="0.45"/>
<rect x="554.8" y="146.3" width="5.4" height="2.2" fill="#b9bfc9" stroke="#3a3a3a" stroke-width="0.45"/>
<path d="M571 140.6 v8" stroke="#d07878" stroke-width="0.45"/>
<rect x="572.2" y="140.7" width="5.4" height="2.2" fill="#b9bfc9" stroke="#3a3a3a" stroke-width="0.45"/>
<rect x="573.1" y="143.5" width="4.5" height="2.2" fill="#b9bfc9" stroke="#3a3a3a" stroke-width="0.45"/>
<rect x="572.2" y="146.3" width="5.4" height="2.2" fill="#b9bfc9" stroke="#3a3a3a" stroke-width="0.45"/>
<path d="M595.0 141.4 h-5.8 v6.4 h5.8 M589.2 144.6 h5" fill="none" stroke="#444" stroke-width="0.6"/><path d="M587.8000000000001 140.6 v8" stroke="#d07878" stroke-width="0.4"/>
<text x="608.2" y="144.0" font-size="4.4" font-weight="bold" text-anchor="middle" fill="#222">y</text><rect x="606.6" y="145.0" width="3.4" height="3" fill="#8fa4c4" stroke="#444" stroke-width="0.45"/><path d="M603.2 144.79999999999998 h8 M603.2 148.2 h8" stroke="#d07878" stroke-width="0.4" stroke-dasharray="0.8 0.5"/><rect x="603.2" y="145.79999999999998" width="1.2" height="1.6" fill="#333"/>
<path d="M520 165.4 l1.4 -3.4 l1.6 1.2 l1.8 -1.4 l1 3.4 l-1.6 2 l-1.4 -1 l-1.6 1.2z" fill="none" stroke="#4a5ac8" stroke-width="0.5"/><g fill="#4a5ac8"><circle cx="520" cy="165.4" r="0.55"/><circle cx="521.4" cy="162.0" r="0.55"/><circle cx="524.8" cy="161.60000000000002" r="0.55"/><circle cx="525.8" cy="165.0" r="0.55"/><circle cx="524.2" cy="167.0" r="0.55"/><circle cx="521.2" cy="167.20000000000002" r="0.55"/></g>
<rect x="536.5" y="161.2" width="3.8" height="3.4" rx="0.4" fill="#b4c4d8" stroke="#444" stroke-width="0.45"/>
<rect x="540.1" y="164.2" width="3.8" height="3.6" rx="0.4" fill="#c8d6e6" stroke="#444" stroke-width="0.45"/>
<rect x="553.8" y="161.2" width="3.8" height="3.4" rx="0.4" fill="#b4c4d8" stroke="#444" stroke-width="0.45"/>
<rect x="557.4" y="164.2" width="3.8" height="3.6" rx="0.4" fill="#c8d6e6" stroke="#444" stroke-width="0.45"/>
<path d="M555 165.8 l1.4 2 l1.2 -1.4" fill="none" stroke="#9a2020" stroke-width="0.7"/>
<rect x="571.2" y="161.2" width="3.8" height="3.4" rx="0.4" fill="#b4c4d8" stroke="#444" stroke-width="0.45"/>
<rect x="574.8" y="164.2" width="3.8" height="3.6" rx="0.4" fill="#c8d6e6" stroke="#444" stroke-width="0.45"/>
<path d="M572.4 165.8 l1.4 2 l1.2 -1.4" fill="none" stroke="#d04040" stroke-width="0.7"/>
<g stroke="#8a7a30" stroke-width="0.45" fill="#e6cf6a"><path d="M589.8 163.20000000000002 h3.4 v3 h-3.4z M589 166.60000000000002 l1 -1" fill="none"/><circle cx="589.6" cy="162.4" r="0.9"/><circle cx="593.6" cy="162.0" r="0.9"/><circle cx="589.2" cy="167.20000000000002" r="0.9"/><circle cx="593.4" cy="166.0" r="0.9"/></g>
<g stroke="#8a7a30" stroke-width="0.45" fill="#e6cf6a"><path d="M605 164.8 l4 -2.4 v4.8z" fill="none"/><circle cx="605" cy="164.8" r="1"/><circle cx="609.2" cy="162.20000000000002" r="1"/><circle cx="609.2" cy="167.4" r="1"/></g>
<g font-size="4.6" fill="#555"><text x="524.8" y="187.3">H:</text><text x="562.8" y="187.3">V:</text></g>
<rect x="531.8" y="179.2" width="29.2" height="13" rx="1.4" fill="#fbfbfa" stroke="#dcdad8" stroke-width="0.5"/>
<text x="533.4" y="187.3" font-size="4.6" fill="#333">0.0</text>
<path d="M548.6 185.8 h3 M555.4 185.8 h3.4 M557.1 184.1 v3.4" stroke="#222" stroke-width="0.8"/>
<rect x="568" y="179.2" width="30.6" height="13" rx="1.4" fill="#fbfbfa" stroke="#dcdad8" stroke-width="0.5"/>
<text x="569.6" y="187.3" font-size="4.6" fill="#333">0.0</text>
<path d="M586.2 185.8 h3 M593 185.8 h3.4 M594.7 184.1 v3.4" stroke="#222" stroke-width="0.8"/>
<g fill="#c4cbd6" stroke="#444" stroke-width="0.45"><rect x="603.6" y="181.4" width="2.2" height="9"/><rect x="606.9" y="180.4" width="2.2" height="10"/><rect x="610.2" y="181.4" width="2.2" height="9"/></g><rect x="604.2" y="183" width="1" height="3" fill="#555"/><rect x="610.8" y="183" width="1" height="3" fill="#555"/>
<rect x="625.2" y="54.4" width="13" height="12.4" rx="1.8" fill="#dcdbd9"/>
<rect x="625.2" y="144.4" width="13" height="12.2" rx="1.8" fill="#dcdbd9"/>
<rect x="625.2" y="183.8" width="13" height="13.2" rx="1.8" fill="#dcdbd9"/>
<rect x="625.2" y="230" width="13" height="12.6" rx="1.8" fill="#dcdbd9"/>
<rect x="625.2" y="302" width="13" height="11.8" rx="1.8" fill="#dcdbd9"/>
<rect x="625.2" y="315.8" width="13" height="11.8" rx="1.8" fill="#dcdbd9"/>
<path d="M629.3 58.4 l4.6 4.4" stroke="#333" stroke-width="0.8"/><circle cx="629.7" cy="58.8" r="1.1" fill="#5a5ac0"/>
<path d="M629 76 l4.6 4.4" stroke="#333" stroke-width="0.8"/><circle cx="629.4" cy="76.4" r="1.1" fill="#5a5ac0"/>
<path d="M629.6 106 h4 M631.6 104 v4 M629.6 117 h4 M633.6 115 v4" stroke="#e2e2e2" stroke-width="0.5"/><rect x="629.4" y="129.8" width="4.6" height="4.4" fill="none" stroke="#e4e4e4" stroke-width="0.5"/>
<path d="M629.2 148.2 l4.6 4.4" stroke="#333" stroke-width="0.8"/><circle cx="629.6" cy="148.6" r="1.1" fill="#5a5ac0"/>
<path d="M629.4 163.2 q3 0 3.2 3 l-0.8 -0.4 M632.6 166.2 l0.8 -0.6" fill="none" stroke="#4a7a4a" stroke-width="0.6"/>
<path d="M629.6 179.2 l4 -3.6" stroke="#4a6a4a" stroke-width="0.8"/>
<path d="M629.4 188.2 q3 0 3.2 3.2 l-1 -0.6" fill="none" stroke="#4a7a4a" stroke-width="0.6"/>
<path d="M629.6 202 q2.6 0 3 3" fill="none" stroke="#4a7a4a" stroke-width="0.6"/>
<path d="M629.6 219.6 l4 -4" stroke="#9a5a40" stroke-width="0.8"/>
<path d="M629.2 234.2 l4.6 4.4" stroke="#333" stroke-width="0.8"/><circle cx="629.6" cy="234.6" r="1.1" fill="#4a6ac8"/>
<rect x="629.6" y="247" width="4" height="4" fill="none" stroke="#999" stroke-width="0.45"/><circle cx="631.6" cy="249" r="0.4" fill="#333"/><rect x="629.6" y="260" width="4" height="4" fill="none" stroke="#999" stroke-width="0.45"/><circle cx="631.6" cy="262" r="0.4" fill="#333"/>
<text x="631.6" y="278.2" font-size="6" font-weight="bold" font-style="italic" text-anchor="middle" fill="#111">A</text>
<rect x="626" y="285" width="12" height="0.5" fill="#e4e4e4"/>
<rect x="629.6" y="292" width="4" height="5" fill="#fff" stroke="#555" stroke-width="0.5"/>
<rect x="629" y="304.6" width="5.4" height="5.6" fill="#6f86e0"/>
<path d="M629.2 325 v-5 M634 325 v-5 M630 325 l3 -5" stroke="#5a6ac8" stroke-width="0.55"/>
<rect x="0" y="339" width="640" height="14.6" fill="#f5f4f2"/>
<rect x="7.5" y="340.8" width="7.28" height="8.4" fill="#000000"/>
<rect x="14.73" y="340.8" width="7.28" height="8.4" fill="#1a1a1a"/>
<rect x="21.96" y="340.8" width="7.28" height="8.4" fill="#333333"/>
<rect x="29.19" y="340.8" width="7.28" height="8.4" fill="#4d4d4d"/>
<rect x="36.42" y="340.8" width="7.28" height="8.4" fill="#666666"/>
<rect x="43.65" y="340.8" width="7.28" height="8.4" fill="#808080"/>
<rect x="50.88" y="340.8" width="7.28" height="8.4" fill="#999999"/>
<rect x="58.11" y="340.8" width="7.28" height="8.4" fill="#b3b3b3"/>
<rect x="65.34" y="340.8" width="7.28" height="8.4" fill="#cccccc"/>
<rect x="72.57" y="340.8" width="7.28" height="8.4" fill="#e6e6e6"/>
<rect x="79.8" y="340.8" width="7.28" height="8.4" fill="#ececec"/>
<rect x="87.03" y="340.8" width="7.28" height="8.4" fill="#f2f2f2"/>
<rect x="94.26" y="340.8" width="7.28" height="8.4" fill="#f9f9f9"/>
<rect x="101.49" y="340.8" width="7.28" height="8.4" fill="#ffffff"/>
<rect x="108.72" y="340.8" width="7.28" height="8.4" fill="#75140c"/>
<rect x="115.95" y="340.8" width="7.28" height="8.4" fill="#ea3323"/>
<rect x="123.18" y="340.8" width="7.28" height="8.4" fill="#808026"/>
<rect x="130.41" y="340.8" width="7.28" height="8.4" fill="#ffff54"/>
<rect x="137.64" y="340.8" width="7.28" height="8.4" fill="#377e22"/>
<rect x="144.87" y="340.8" width="7.28" height="8.4" fill="#75fb4c"/>
<rect x="152.1" y="340.8" width="7.28" height="8.4" fill="#377e7f"/>
<rect x="159.33" y="340.8" width="7.28" height="8.4" fill="#75fbfd"/>
<rect x="166.56" y="340.8" width="7.28" height="8.4" fill="#00007b"/>
<rect x="173.79" y="340.8" width="7.28" height="8.4" fill="#0000f5"/>
<rect x="181.02" y="340.8" width="7.28" height="8.4" fill="#75147c"/>
<rect x="188.25" y="340.8" width="7.28" height="8.4" fill="#ea33f7"/>
<rect x="195.48" y="340.8" width="7.28" height="8.4" fill="#270301"/>
<rect x="202.71" y="340.8" width="7.28" height="8.4" fill="#4d0a05"/>
<rect x="209.94" y="340.8" width="7.28" height="8.4" fill="#75140c"/>
<rect x="217.17" y="340.8" width="7.28" height="8.4" fill="#9c1f14"/>
<rect x="224.4" y="340.8" width="7.28" height="8.4" fill="#c2291b"/>
<rect x="231.63" y="340.8" width="7.28" height="8.4" fill="#ea3323"/>
<rect x="238.86" y="340.8" width="7.28" height="8.4" fill="#ea4338"/>
<rect x="246.09" y="340.8" width="7.28" height="8.4" fill="#ec625c"/>
<rect x="253.32" y="340.8" width="7.28" height="8.4" fill="#ef8784"/>
<rect x="260.55" y="340.8" width="7.28" height="8.4" fill="#f3aeac"/>
<rect x="267.78" y="340.8" width="7.28" height="8.4" fill="#f8d7d6"/>
<rect x="275.01" y="340.8" width="7.28" height="8.4" fill="#240d0c"/>
<rect x="282.24" y="340.8" width="7.28" height="8.4" fill="#491a18"/>
<rect x="289.47" y="340.8" width="7.28" height="8.4" fill="#6e2825"/>
<rect x="296.7" y="340.8" width="7.28" height="8.4" fill="#933531"/>
<rect x="303.93" y="340.8" width="7.28" height="8.4" fill="#b8433e"/>
<rect x="311.16" y="340.8" width="7.28" height="8.4" fill="#c56663"/>
<rect x="318.39" y="340.8" width="7.28" height="8.4" fill="#d28b89"/>
<rect x="325.62" y="340.8" width="7.28" height="8.4" fill="#e0b1b0"/>
<rect x="332.85" y="340.8" width="7.28" height="8.4" fill="#efd8d8"/>
<rect x="340.08" y="340.8" width="7.28" height="8.4" fill="#231c1c"/>
<rect x="347.31" y="340.8" width="7.28" height="8.4" fill="#453837"/>
<rect x="354.54" y="340.8" width="7.28" height="8.4" fill="#685454"/>
<rect x="361.77" y="340.8" width="7.28" height="8.4" fill="#8c7070"/>
<rect x="369" y="340.8" width="7.28" height="8.4" fill="#a89493"/>
<rect x="376.23" y="340.8" width="7.28" height="8.4" fill="#c5b8b7"/>
<rect x="383.46" y="340.8" width="7.28" height="8.4" fill="#e2dbdb"/>
<rect x="390.69" y="340.8" width="7.28" height="8.4" fill="#281203"/>
<rect x="397.92" y="340.8" width="7.28" height="8.4" fill="#4f2509"/>
<rect x="405.15" y="340.8" width="7.28" height="8.4" fill="#773812"/>
<rect x="412.38" y="340.8" width="7.28" height="8.4" fill="#9e4a1b"/>
<rect x="419.61" y="340.8" width="7.28" height="8.4" fill="#c55d24"/>
<rect x="426.84" y="340.8" width="7.28" height="8.4" fill="#ed702d"/>
<rect x="434.07" y="340.8" width="7.28" height="8.4" fill="#ef8641"/>
<rect x="441.3" y="340.8" width="7.28" height="8.4" fill="#f19e62"/>
<rect x="448.53" y="340.8" width="7.28" height="8.4" fill="#f4b688"/>
<rect x="455.76" y="340.8" width="7.28" height="8.4" fill="#f7ceaf"/>
<rect x="462.99" y="340.8" width="7.28" height="8.4" fill="#fbe7d7"/>
<rect x="470.22" y="340.8" width="7.28" height="8.4" fill="#26180d"/>
<rect x="477.45" y="340.8" width="7.28" height="8.4" fill="#4b2f1a"/>
<rect x="484.68" y="340.8" width="7.28" height="8.4" fill="#714728"/>
<rect x="491.91" y="340.8" width="7.28" height="8.4" fill="#975d36"/>
<rect x="499.14" y="340.8" width="7.28" height="8.4" fill="#bc7543"/>
<rect x="506.37" y="340.8" width="7.28" height="8.4" fill="#c99067"/>
<rect x="513.6" y="340.8" width="7.28" height="8.4" fill="#d6ac8c"/>
<rect x="520.83" y="340.8" width="7.28" height="8.4" fill="#e3c7b2"/>
<rect x="528.06" y="340.8" width="7.28" height="8.4" fill="#f1e4d8"/>
<rect x="535.29" y="340.8" width="7.28" height="8.4" fill="#231f1c"/>
<rect x="542.52" y="340.8" width="7.28" height="8.4" fill="#463e38"/>
<rect x="549.75" y="340.8" width="7.28" height="8.4" fill="#6a5e54"/>
<rect x="556.98" y="340.8" width="7.28" height="8.4" fill="#8e7d71"/>
<rect x="564.21" y="340.8" width="7.28" height="8.4" fill="#a99e94"/>
<rect x="571.44" y="340.8" width="7.28" height="8.4" fill="#c6beb8"/>
<rect x="578.67" y="340.8" width="7.28" height="8.4" fill="#e2dedb"/>
<rect x="585.9" y="340.8" width="7.28" height="8.4" fill="#2a2205"/>
<rect x="593.13" y="340.8" width="7.28" height="8.4" fill="#524511"/>
<rect x="600.36" y="340.8" width="7.28" height="8.4" fill="#7c671e"/>
<rect x="607.59" y="340.8" width="7.28" height="8.4" fill="#a5892c"/>
<rect x="614.82" y="340.8" width="7.28" height="8.4" fill="#cdac39"/>
<rect x="622.05" y="340.8" width="3.95" height="8.4" fill="#f7ce46"/>
<path d="M0.6 341.4 l6.2 7.4 M6.8 341.4 l-6.2 7.4" stroke="#c04a4a" stroke-width="0.6"/>
<rect x="2" y="350.2" width="624" height="3" fill="#dcdcdc"/>
<rect x="2" y="350.4" width="122" height="2.4" rx="1" fill="#8a8a8a"/>
<path d="M634 346 v4 l-2.4 -2z" fill="#222"/>
<g font-size="4.5" fill="#2a2a2a" stroke="#2a2a2a" stroke-width="0.1">
<text x="15.6" y="358.6" text-anchor="end">Fill:</text><text x="15.6" y="365" text-anchor="end">Stroke:</text><text x="27" y="358.6">N/A</text><text x="27" y="365">N/A</text>
</g>
<text x="57.8" y="362.4" font-size="4.8" fill="#2a2a2a" stroke="#2a2a2a" stroke-width="0.1">O:</text>
<rect x="63.2" y="355" width="32" height="12" rx="1" fill="#f8f8f7" stroke="#e4e2e0" stroke-width="0.5"/><text x="64.6" y="362.6" font-size="4.4" fill="#c4c4c4">50</text><path d="M76.6 361 h3 M83.6 361 h3 M85.1 359.5 v3" stroke="#dadada" stroke-width="0.5"/>
<ellipse cx="103.2" cy="360.6" rx="3.1" ry="2.1" fill="#2a2a2a"/><ellipse cx="102" cy="360.2" rx="1.1" ry="0.7" fill="#cfcfcf"/><circle cx="103.4" cy="361" r="0.9" fill="#000"/>
<path d="M115.2 360.6 v-1.2 a1.5 1.5 0 0 1 3 -0.2" fill="none" stroke="#6f7a52" stroke-width="0.75"/><ellipse cx="117" cy="362" rx="2.2" ry="1.9" fill="none" stroke="#6f7a52" stroke-width="0.8"/>
<rect x="123.6" y="354.6" width="30.4" height="12.2" rx="1.2" fill="#f3f2f0" stroke="#e6e4e2" stroke-width="0.4"/>
<text x="127.8" y="362.2" font-size="4.3" fill="#111" stroke="#111" stroke-width="0.08" textLength="15.6" lengthAdjust="spacingAndGlyphs">•Layer 1</text><path d="M146 360.2 h4 l-2 2.2z" fill="#111"/>
<text x="154.9" y="362.8" font-size="5.1" fill="#262626" textLength="59.3" lengthAdjust="spacingAndGlyphs">No objects selected. Click, Sh</text>
<rect x="512" y="354" width="0.5" height="13" fill="#e4e2e0"/>
<g font-size="4.5" fill="#2a2a2a" stroke="#2a2a2a" stroke-width="0.1"><text x="516" y="359.2">X:</text><text x="516" y="365.6">Y:</text><text x="538" y="359.2" text-anchor="end">5.55</text><text x="538" y="365.6" text-anchor="end">57.78</text><text x="541.4" y="362.4">Z:</text></g><text x="589.8" y="362.4" font-size="4.5" fill="#999">R:</text>
<rect x="550" y="355" width="34.4" height="12" rx="1.2" fill="#fbfbfa" stroke="#e4e2e0" stroke-width="0.5"/><text x="553.2" y="362.6" font-size="4.6" fill="#222" stroke="#222" stroke-width="0.1">138%</text><path d="M570.4 361 h3.4 M578 361 h3.6 M579.8 359.2 v3.6" stroke="#1a1a1a" stroke-width="0.95"/>
<rect x="597.6" y="355" width="37.4" height="12" rx="1.2" fill="#fbfbfa" stroke="#e4e2e0" stroke-width="0.5"/><text x="604" y="362.6" font-size="4.6" fill="#222" stroke="#222" stroke-width="0.1">0.00°</text><path d="M620.4 361 h3.4 M629 361 h3.6 M630.8 359.2 v3.6" stroke="#1a1a1a" stroke-width="0.95"/>
<rect x="216.2" y="347.4" width="206.8" height="17.4" rx="1.5" fill="#000" opacity="0.06"/>
<rect x="216.6" y="347.8" width="206" height="16.6" rx="1.2" fill="#ffffff" stroke="#e2e2e2" stroke-width="0.4"/>
<rect x="220.2" y="352.2" width="2.8" height="7.4" rx="0.4" fill="#e0e0e0"/><rect x="221.3" y="353" width="0.5" height="5.8" fill="#c8c8c8"/>
<text x="226.9" y="357.8" font-size="5.1" fill="#444" textLength="133.4" lengthAdjust="spacingAndGlyphs">Screencastify - Screen Video Recorder is sharing your screen.</text>
<rect x="365" y="350.4" width="36.6" height="11.4" rx="1" fill="#f1f1f1"/>
<text x="371" y="357.8" font-size="5.1" fill="#777" textLength="27" lengthAdjust="spacingAndGlyphs">Stop sharing</text>
<text x="409" y="357.8" font-size="5.1" fill="#3a73d8" textLength="10" lengthAdjust="spacingAndGlyphs">Hide</text>
<rect x="106" y="368.4" width="431.5" height="29.6" rx="5" fill="url(#dockG)"/>
<rect x="110" y="372" width="20" height="20" rx="4.5" fill="url(#finderG)" />
<path d="M120.4 372 q-2 5 -0.8 10 h1.4 q-0.6 5 0.4 10 h8 q0 0 0 0 v-20z" fill="#eef2f8"/>
<path d="M124.8 372 h0.7 q4 0 4 4 v12 q0 4 -4 4 h-4.9 q-0.8 -5 -0.2 -10 h-1.4 q-1 -5 0.8 -10z" fill="#eef2f8"/>
<path d="M114.2 384.6 q6 3.6 12 0" fill="none" stroke="#1a2a4a" stroke-width="0.7"/><rect x="115" y="376.4" width="0.9" height="2.4" fill="#1a2a4a"/><rect x="124.2" y="376.4" width="0.9" height="2.4" fill="#1a2a4a"/>
<rect x="136" y="372" width="20" height="20" rx="4.5" fill="#a4a4a6" />
<circle cx="146" cy="382" r="8" fill="#c8c8ca"/><circle cx="146" cy="382" r="7.2" fill="#2e2e30"/><circle cx="146" cy="382" r="5.4" fill="none" stroke="#6a6a6c" stroke-width="1.1"/><circle cx="146" cy="382" r="1.8" fill="#8a8a8c"/><path d="M146 376.8 v3.4 M141.5 384.6 l2.9 -1.6 M150.5 384.6 l-2.9 -1.6" stroke="#8a8a8c" stroke-width="1.1"/>
<rect x="162" y="372" width="20" height="20" rx="4.5" fill="#dcdce4" />
<rect x="165.4" y="375.4" width="3.6" height="3.6" rx="0.8" fill="#5ac05a"/>
<rect x="170.3" y="375.4" width="3.6" height="3.6" rx="0.8" fill="#e8c840"/>
<rect x="175.2" y="375.4" width="3.6" height="3.6" rx="0.8" fill="#f09a3a"/>
<rect x="165.4" y="380.3" width="3.6" height="3.6" rx="0.8" fill="#e04848"/>
<rect x="170.3" y="380.3" width="3.6" height="3.6" rx="0.8" fill="#9a9aa8"/>
<rect x="175.2" y="380.3" width="3.6" height="3.6" rx="0.8" fill="#e05070"/>
<rect x="165.4" y="385.2" width="3.6" height="3.6" rx="0.8" fill="#9a50d0"/>
<rect x="170.3" y="385.2" width="3.6" height="3.6" rx="0.8" fill="#4a90e0"/>
<rect x="175.2" y="385.2" width="3.6" height="3.6" rx="0.8" fill="#40b8a0"/>
<rect x="188" y="372" width="20" height="20" rx="4.5" fill="#f7f7f9" />
<circle cx="192.8" cy="377.4" r="1.2" fill="#3a7ae0"/><rect x="195.4" y="376.9" width="9" height="0.8" fill="#ddd"/>
<circle cx="192.8" cy="382" r="1.2" fill="#e05050"/><rect x="195.4" y="381.5" width="9" height="0.8" fill="#ddd"/>
<circle cx="192.8" cy="386.6" r="1.2" fill="#e0a040"/><rect x="195.4" y="386.1" width="9" height="0.8" fill="#ddd"/>
<rect x="214" y="372" width="20" height="20" rx="4.5" fill="url(#ccG)" />
<rect x="214" y="372" width="20" height="20" rx="4.5" fill="url(#ccG2)" />
<path d="M220.8 386 a3.4 3.4 0 0 1 0 -6.8 a4.2 4.2 0 0 1 7.4 0.4 a3.2 3.2 0 0 1 -0.2 6.4z" fill="none" stroke="#fff" stroke-width="0.9"/><path d="M221.2 383.2 a1.5 1.5 0 1 1 2.4 -1.2 l1.6 2 a1.5 1.5 0 1 0 2.4 -1.2" fill="none" stroke="#fff" stroke-width="0.8"/>
<rect x="239.6" y="372" width="20" height="20" rx="4.5" fill="#0b2235" />
<text x="249.6" y="385.4" font-size="10" font-weight="bold" text-anchor="middle" fill="#31a8ff">Ps</text>
<rect x="265.6" y="372" width="20" height="20" rx="4.5" fill="#2c0b03" />
<text x="275.6" y="385.4" font-size="10" font-weight="bold" text-anchor="middle" fill="#ff9a00">Ai</text>
<rect x="291.2" y="372" width="20" height="20" rx="4.5" fill="#f6f6f6" />
<path d="M301.4 373.8 l-7 8.6 q-0.6 0.8 0.4 1 l2 0.3 l-1.4 1.6 q-0.4 0.6 0.4 0.7 l2.6 0.2 l-0.8 1.6 q1.4 1.6 3.2 0.6 l0.6 -1 l1.4 1.4 q1 0.6 1.6 -0.2 l-0.6 -1.2 l2 -0.2 q0.8 -0.2 0.2 -0.8 l-1.6 -1 l2.4 -0.4 q1 -0.2 0.4 -1z" fill="#141414"/>
<path d="M301.4 373.8 l-4.4 5.4 l1.6 0.2 l3.4 -3.8 l2 2.6 l0.6 -0.4z" fill="#fff" opacity="0.9"/>
<ellipse cx="296.2" cy="390" rx="1.2" ry="0.6" fill="#141414"/><ellipse cx="306.6" cy="389.4" rx="1" ry="0.6" fill="#141414"/>
<rect x="317.4" y="372" width="20" height="20" rx="4.5" fill="#f2f1ec" />
<rect x="317.4" y="372" width="20" height="5" rx="4" fill="#f6cf3a"/><rect x="317.4" y="374.6" width="20" height="2.6" fill="#f6cf3a"/>
<rect x="319.6" y="381" width="15.6" height="0.4" fill="#e6e2d6"/>
<rect x="319.6" y="384.4" width="15.6" height="0.4" fill="#e6e2d6"/>
<rect x="319.6" y="387.8" width="15.6" height="0.4" fill="#e6e2d6"/>
<rect x="343" y="372" width="20" height="20" rx="4.5" fill="#f4f6fa" />
<circle cx="353" cy="382" r="8" fill="#3a9cf0"/><circle cx="353" cy="382" r="7" fill="#5ab4f8"/><path d="M357.6 377.4 l-3.4 5.8 l-2.4 -2.4z" fill="#e84040"/><path d="M348.4 386.6 l3.4 -5.8 l2.4 2.4z" fill="#fff"/>
<rect x="368.8" y="372" width="20" height="20" rx="4.5" fill="#f6f6f6" />
<circle cx="378.8" cy="382" r="7.8" fill="#e0463c"/><path d="M378.8 382 L372 385.9 A7.8 7.8 0 0 0 382.7 388.8z" fill="#2fa84f"/><path d="M378.8 382 L382.7 388.8 A7.8 7.8 0 0 0 385.6 378.1 L378.8 378.1z" fill="#f6c026"/><circle cx="378.8" cy="382" r="3.6" fill="#fff"/><circle cx="378.8" cy="382" r="2.8" fill="#3a7ae8"/>
<rect x="395.6" y="372" width="20" height="20" rx="4.5" fill="#8e8c92" />
<ellipse cx="408.8" cy="382" rx="3.4" ry="2.1" transform="rotate(0 408.8 382)" fill="#f2a03a" opacity="0.45"/>
<ellipse cx="407.86" cy="384.26" rx="3.4" ry="2.1" transform="rotate(45 407.86 384.26)" fill="#f06a3a" opacity="0.45"/>
<ellipse cx="405.6" cy="385.2" rx="3.4" ry="2.1" transform="rotate(90 405.6 385.2)" fill="#d0407a" opacity="0.45"/>
<ellipse cx="403.34" cy="384.26" rx="3.4" ry="2.1" transform="rotate(135 403.34 384.26)" fill="#8050c8" opacity="0.45"/>
<ellipse cx="402.4" cy="382" rx="3.4" ry="2.1" transform="rotate(180 402.4 382)" fill="#4a80e0" opacity="0.45"/>
<ellipse cx="403.34" cy="379.74" rx="3.4" ry="2.1" transform="rotate(225 403.34 379.74)" fill="#40b0c0" opacity="0.45"/>
<ellipse cx="405.6" cy="378.8" rx="3.4" ry="2.1" transform="rotate(270 405.6 378.8)" fill="#60c060" opacity="0.45"/>
<ellipse cx="407.86" cy="379.74" rx="3.4" ry="2.1" transform="rotate(315 407.86 379.74)" fill="#e0d040" opacity="0.45"/>
<rect x="423.6" y="371" width="0.5" height="24" fill="#6e6aa0"/>
<path d="M431 376 h7 l1.6 1.6 h10.4 v14 h-19z" fill="url(#folderG)"/><rect x="431" y="378.6" width="19" height="13" rx="1" fill="#5ab4f0"/><rect x="437.6" y="374" width="5" height="3.4" fill="#fff" opacity="0.8"/>
<rect x="456.4" y="375.8" width="23.4" height="12.6" fill="#f8f8f8"/><rect x="462" y="379" width="3" height="1" fill="#ccc"/><rect x="464" y="383" width="8" height="0.5" fill="#ddd"/>
<circle cx="475.2" cy="389.2" r="3.2" fill="#fff"/><circle cx="475.2" cy="389.2" r="2.5" fill="#e0463c"/><path d="M475.2 389.2 L473.03 390.45 A2.5 2.5 0 0 0 476.45 391.37z" fill="#2fa84f"/><path d="M475.2 389.2 L476.45 391.37 A2.5 2.5 0 0 0 477.37 387.95z" fill="#f6c026"/><circle cx="475.2" cy="389.2" r="1.1" fill="#fff"/><circle cx="475.2" cy="389.2" r="0.8" fill="#3a7ae8"/>
<rect x="482.6" y="376" width="22.4" height="12.6" fill="#1a1a1a"/><rect x="482.6" y="376" width="22.4" height="1.4" fill="#e8e8e8"/><rect x="487" y="381" width="5" height="1" fill="#777"/><rect x="495" y="382" width="6" height="2" fill="#555"/>
<circle cx="500.6" cy="389.4" r="3.2" fill="#fff"/><circle cx="500.6" cy="389.4" r="2.5" fill="#e0463c"/><path d="M500.6 389.4 L498.43 390.65 A2.5 2.5 0 0 0 501.85 391.57z" fill="#2fa84f"/><path d="M500.6 389.4 L501.85 391.57 A2.5 2.5 0 0 0 502.77 388.15z" fill="#f6c026"/><circle cx="500.6" cy="389.4" r="1.1" fill="#fff"/><circle cx="500.6" cy="389.4" r="0.8" fill="#3a7ae8"/>
<path d="M511.4 374.2 h17.8 l-2.2 17.8 q-6.7 1.4 -13.4 0z" fill="#dcdcdc" stroke="#bdbdbd" stroke-width="0.5"/><ellipse cx="520.3" cy="374.4" rx="8.8" ry="1.6" fill="#c8c8c8"/><path d="M515 377 l1.5 13 M520.3 377 v13 M525.6 377 l-1.5 13" stroke="#c4c4c4" stroke-width="0.5"/>
<g fill="#222"><circle cx="120" cy="396.2" r="0.6"/><circle cx="301.2" cy="396.2" r="0.6"/><circle cx="378.8" cy="396.2" r="0.6"/></g>
</svg>
</body></html>
